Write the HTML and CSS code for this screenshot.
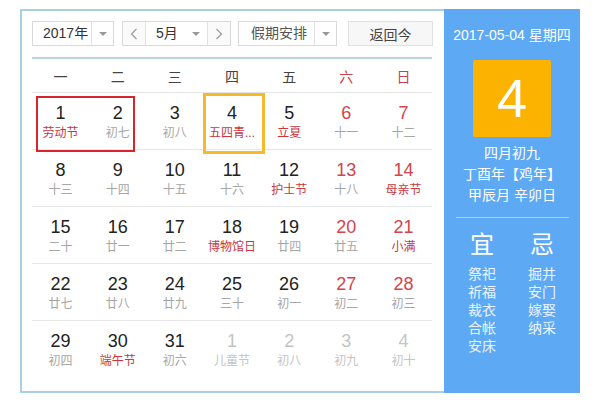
FILE: index.html
```html
<!DOCTYPE html>
<html lang="zh-CN">
<head>
<meta charset="utf-8">
<title>万年历</title>
<link rel="stylesheet" href="styles.css">
</head>
<body>
<div class="wrap">
  <div class="main">
    <div class="controls">
      <div class="sel year"><span class="sel-text">2017年</span><span class="sel-arrow"><i class="tri"></i></span></div>
      <div class="month-group">
        <span class="nav"><svg width="8" height="12" viewBox="0 0 8 12"><polyline points="6.5,1 1.5,6 6.5,11" fill="none" stroke="#999" stroke-width="1.2"/></svg></span>
        <span class="month"><span class="sel-text">5月</span><i class="tri"></i></span>
        <span class="nav last"><svg width="8" height="12" viewBox="0 0 8 12"><polyline points="1.5,1 6.5,6 1.5,11" fill="none" stroke="#999" stroke-width="1.2"/></svg></span>
      </div>
      <div class="sel holiday"><span class="sel-text">假期安排</span><span class="sel-arrow"><i class="tri"></i></span></div>
      <div class="btn">返回今</div>
    </div>
    <div class="weekdays">
      <span>一</span><span>二</span><span>三</span><span>四</span><span>五</span><span class="we">六</span><span class="we">日</span>
    </div>
    <div class="grid">
      <div class="row">
        <div class="cell"><b>1</b><small class="fest">劳动节</small></div>
        <div class="cell"><b>2</b><small>初七</small></div>
        <div class="cell"><b>3</b><small>初八</small></div>
        <div class="cell today"><b>4</b><small class="fest">五四青...</small></div>
        <div class="cell"><b>5</b><small class="fest">立夏</small></div>
        <div class="cell we"><b>6</b><small>十一</small></div>
        <div class="cell we"><b>7</b><small>十二</small></div>
        <div class="holiday-box"></div>
      </div>
      <div class="row">
        <div class="cell"><b>8</b><small>十三</small></div>
        <div class="cell"><b>9</b><small>十四</small></div>
        <div class="cell"><b>10</b><small>十五</small></div>
        <div class="cell"><b>11</b><small>十六</small></div>
        <div class="cell"><b>12</b><small class="fest">护士节</small></div>
        <div class="cell we"><b>13</b><small>十八</small></div>
        <div class="cell we"><b>14</b><small class="fest">母亲节</small></div>
      </div>
      <div class="row">
        <div class="cell"><b>15</b><small>二十</small></div>
        <div class="cell"><b>16</b><small>廿一</small></div>
        <div class="cell"><b>17</b><small>廿二</small></div>
        <div class="cell"><b>18</b><small class="fest">博物馆日</small></div>
        <div class="cell"><b>19</b><small>廿四</small></div>
        <div class="cell we"><b>20</b><small>廿五</small></div>
        <div class="cell we"><b>21</b><small class="fest">小满</small></div>
      </div>
      <div class="row">
        <div class="cell"><b>22</b><small>廿七</small></div>
        <div class="cell"><b>23</b><small>廿八</small></div>
        <div class="cell"><b>24</b><small>廿九</small></div>
        <div class="cell"><b>25</b><small>三十</small></div>
        <div class="cell"><b>26</b><small>初一</small></div>
        <div class="cell we"><b>27</b><small>初二</small></div>
        <div class="cell we"><b>28</b><small>初三</small></div>
      </div>
      <div class="row last">
        <div class="cell"><b>29</b><small>初四</small></div>
        <div class="cell"><b>30</b><small class="fest">端午节</small></div>
        <div class="cell"><b>31</b><small>初六</small></div>
        <div class="cell other"><b>1</b><small>儿童节</small></div>
        <div class="cell other"><b>2</b><small>初八</small></div>
        <div class="cell other"><b>3</b><small>初九</small></div>
        <div class="cell other"><b>4</b><small>初十</small></div>
      </div>
    </div>
  </div>
  <div class="side">
    <div class="side-date">2017-05-04 星期四</div>
    <div class="big-day">4</div>
    <div class="lunar">
      <div>四月初九</div>
      <div>丁酉年【鸡年】</div>
      <div>甲辰月 辛卯日</div>
    </div>
    <div class="divider"></div>
    <div class="yiji">
      <div class="col">
        <div class="yj-title">宜</div>
        <div class="yj-item">祭祀</div>
        <div class="yj-item">祈福</div>
        <div class="yj-item">裁衣</div>
        <div class="yj-item">合帐</div>
        <div class="yj-item">安床</div>
      </div>
      <div class="col">
        <div class="yj-title">忌</div>
        <div class="yj-item">掘井</div>
        <div class="yj-item">安门</div>
        <div class="yj-item">嫁娶</div>
        <div class="yj-item">纳采</div>
      </div>
    </div>
  </div>
</div>
</body>
</html>
```
FILE: styles.css
```css
* { box-sizing: border-box; }
html, body { margin: 0; padding: 0; background: #fff; }
body {
  font-family: "Liberation Sans", "Noto Sans CJK SC", sans-serif;
  width: 600px;
  height: 402px;
  overflow: hidden;
}
.wrap {
  display: flex;
  margin: 9px 0 0 20px;
  width: 560px;
  height: 384px;
}
.main {
  width: 424px;
  height: 384px;
  border: 2px solid #a9cfe2;
  border-right: none;
  padding: 10px 0 0 10px;
}
.controls {
  display: flex;
  height: 25px;
  width: 401px;
  font-size: 14px;
  color: #333;
}
.sel, .month-group, .btn {
  display: flex;
  align-items: center;
  height: 25px;
  border: 1px solid #d9d9d9;
  background: #fff;
}
.sel-text { line-height: 23px; }
.year { width: 82px; padding-left: 10px; }
.year .sel-text { width: 48px; }
.sel-arrow {
  flex: 1;
  height: 100%;
  border-left: 1px solid #e2e2e2;
  display: flex;
  align-items: center;
  justify-content: center;
}
.tri {
  display: block;
  width: 0;
  height: 0;
  border-left: 4px solid transparent;
  border-right: 4px solid transparent;
  border-top: 4px solid #999;
}
.month-group { margin-left: 8px; width: 109px; }
.nav {
  width: 23px;
  height: 100%;
  display: flex;
  align-items: center;
  justify-content: center;
  background: #fafafa;
  border-right: 1px solid #e2e2e2;
}
.nav.last { border-right: none; border-left: 1px solid #e2e2e2; }
.month {
  flex: 1;
  display: flex;
  align-items: center;
  padding-left: 10px;
  height: 100%;
}
.month .sel-text { width: 36px; }
.holiday { margin-left: 7px; width: 99px; padding-left: 12px; color: #555; }
.holiday .sel-text { width: 63px; }
.btn {
  margin-left: 11px;
  width: 85px;
  justify-content: center;
  background: #f7f7f7;
  border-color: #e0e0e0;
  color: #444;
}
.weekdays {
  margin-top: 11px;
  width: 400px;
  border-top: 2px solid #b9d8e4;
  border-bottom: 1px solid #e6e6e6;
  display: grid;
  grid-template-columns: repeat(7, 1fr);
  height: 36px;
  align-items: center;
  font-size: 14px;
  color: #444;
  text-align: center;
}
.weekdays .we { color: #c9414a; }
.grid { width: 400px; }
.row {
  position: relative;
  display: grid;
  grid-template-columns: repeat(7, 1fr);
  height: 57px;
  border-bottom: 1px solid #e6e6e6;
}
.row.last { border-bottom: none; }
.cell {
  display: flex;
  flex-direction: column;
  align-items: center;
  padding-top: 9px;
  position: relative;
}
.cell b {
  font-weight: normal;
  font-size: 18px;
  line-height: 22px;
  color: #222;
}
.cell small {
  font-size: 12px;
  line-height: 18px;
  color: #a6a6a6;
  white-space: nowrap;
}
.cell small.fest { color: #c9363e; }
.cell.we b { color: #d3444c; }
.cell.other b, .cell.other small { color: #c4c4c4; }
.cell.today::after {
  content: "";
  position: absolute;
  left: 0;
  top: 0;
  width: 56px;
  height: 55px;
  border: 3px solid #f5b92c;
}
.holiday-box {
  position: absolute;
  left: 4px;
  top: 3px;
  width: 99px;
  height: 56px;
  border: 2px solid #d9242b;
  z-index: 1;
}
.side {
  width: 136px;
  height: 384px;
  background: #5ea9f3;
  color: #fff;
  display: flex;
  flex-direction: column;
  align-items: center;
  padding-top: 17px;
}
.side-date { font-size: 14px; line-height: 18px; }
.big-day {
  margin-top: 16px;
  width: 78px;
  height: 77px;
  background: #fbb300;
  border-radius: 2px;
  font-size: 54px;
  line-height: 77px;
  text-align: center;
}
.lunar {
  margin-top: 6px;
  font-size: 14px;
  line-height: 21px;
  text-align: center;
}
.divider {
  margin-top: 11px;
  width: 113px;
  height: 1px;
  background: rgba(255, 255, 255, 0.45);
}
.yiji {
  margin-top: 12px;
  display: flex;
  width: 120px;
}
.col {
  width: 60px;
  display: flex;
  flex-direction: column;
  align-items: center;
}
.yj-title { font-size: 24px; line-height: 30px; margin-bottom: 5px; }
.yj-item { font-size: 14px; line-height: 18px; color: #eaf4ff; }
```
